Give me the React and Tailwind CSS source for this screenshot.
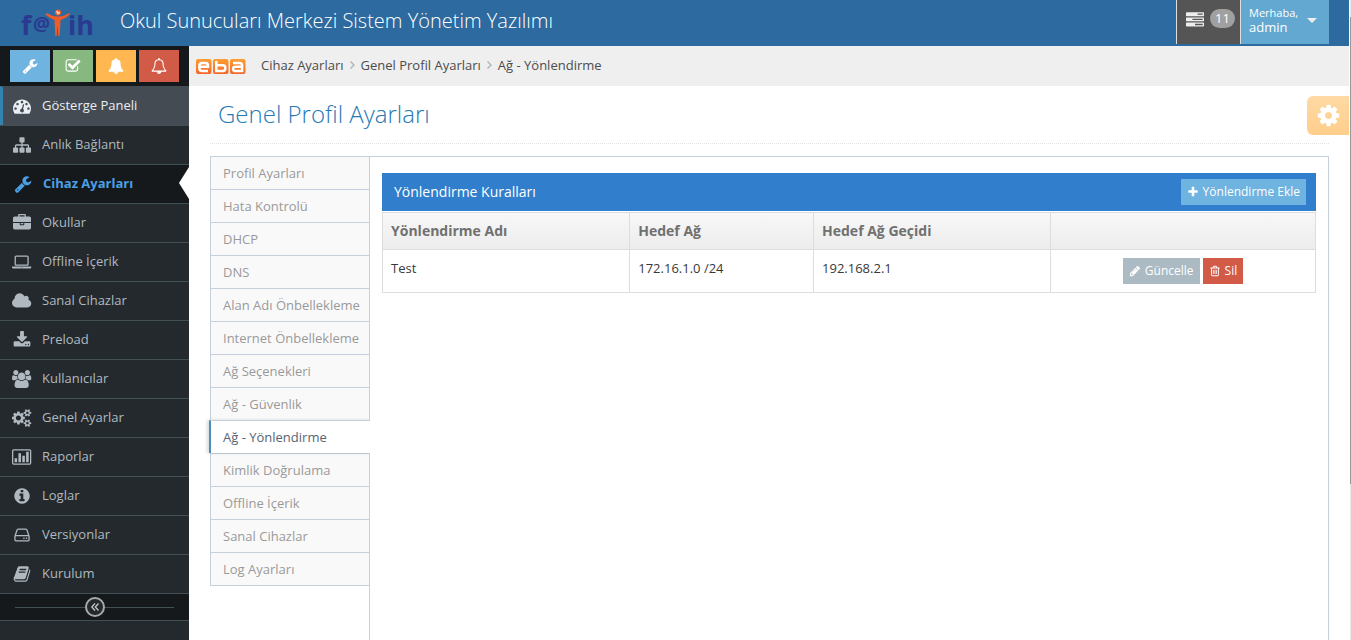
const ICONS = {
  wrench: [1792, "M448 1472q0-26-19-45t-45-19-45 19-19 45 19 45 45 19 45-19 19-45zm644-420l-682 682q-37 37-90 37-52 0-91-37l-106-108q-38-36-38-90 0-53 38-91l681-681q39 98 114.500 173.500t173.500 114.500zm634-435q0 39-23 106-47 134-164.500 217.500t-258.500 83.500q-185 0-316.500-131.500t-131.500-316.500 131.500-316.500 316.500-131.500q58 0 121.500 16.500t107.500 46.500q16 11 16 28t-16 28l-293 169v224l193 107q5-3 79-48.500t135.500-81 70.500-35.500q15 0 23.500 10t8.500 25z"],
  check: [1792, "M1472 930v318q0 119-84.500 203.500t-203.500 84.500h-832q-119 0-203.500-84.500t-84.500-203.500v-832q0-119 84.500-203.500t203.500-84.500h832q63 0 117 25 15 7 18 23 3 17-9 29l-49 49q-10 10-23 10-3 0-9-2-23-6-45-6h-832q-66 0-113 47t-47 113v832q0 66 47 113t113 47h832q66 0 113-47t47-113v-254q0-13 9-22l64-64q10-10 23-10 6 0 12 3 20 8 20 29zm231-489l-814 814q-24 24-57 24t-57-24l-430-430q-24-24-24-57t24-57l110-110q24-24 57-24t57 24l263 263 647-647q24-24 57-24t57 24l110 110q24 24 24 57t-24 57z"],
  gauge: [1792, "M384 1152q0-53-37.500-90.500t-90.500-37.500-90.500 37.500-37.500 90.500 37.500 90.500 90.500 37.500 90.500-37.500 37.500-90.500zm192-448q0-53-37.500-90.500t-90.500-37.500-90.500 37.500-37.500 90.500 37.500 90.500 90.500 37.500 90.500-37.500 37.500-90.500zm428 481l101-382q6-26-7.500-48.500t-38.500-29.500-48 6.500-30 39.500l-101 382q-60 5-107 43.500t-63 98.500q-20 77 20 146t117 89 146-20 89-117q16-60-6-117t-72-91zm660-33q0-53-37.500-90.500t-90.500-37.500-90.500 37.500-37.500 90.500 37.500 90.500 90.500 37.500 90.500-37.500 37.500-90.500zm-640-640q0-53-37.500-90.500t-90.500-37.500-90.500 37.500-37.500 90.500 37.500 90.500 90.500 37.500 90.500-37.500 37.500-90.500zm448 192q0-53-37.500-90.500t-90.500-37.500-90.500 37.500-37.500 90.500 37.500 90.500 90.500 37.500 90.500-37.500 37.500-90.500zm320 448q0 261-141 483-19 29-54 29h-1402q-35 0-54-29-141-221-141-483 0-182 71-348t191-286 286-191 348-71 348 71 286 191 191 286 71 348z"],
  bell: [1792, "M912 1696q0-16-16-16-59 0-101.500-42.500t-42.500-101.500q0-16-16-16t-16 16q0 73 51.500 124.500t124.500 51.500q16 0 16-16zm816-288q0 52-38 90t-90 38h-448q0 106-75 181t-181 75-181-75-75-181h-448q-52 0-90-38t-38-90q50-42 91-88t85-119.500 74.500-158.500 50-206 19.500-260q0-152 117-282.500t307-158.500q-8-19-8-39 0-40 28-68t68-28 68 28 28 68q0 20-8 39 190 28 307 158.500t117 282.500q0 139 19.500 260t50 206 74.500 158.500 85 119.500 91 88z"],
  bellOutline: [1792, "M912 1696q0-16-16-16-59 0-101.500-42.500t-42.500-101.500q0-16-16-16t-16 16q0 73 51.500 124.500t124.500 51.500q16 0 16-16zm-666-288h1300q-266-300-266-832 0-51-24-105t-69-103-121.500-80.500-169.500-31.500-169.500 31.500-121.500 80.500-69 103-24 105q0 532-266 832zm1482 0q0 52-38 90t-90 38h-448q0 106-75 181t-181 75-181-75-75-181h-448q-52 0-90-38t-38-90q50-42 91-88t85-119.500 74.500-158.500 50-206 19.500-260q0-152 117-282.500t307-158.500q-8-19-8-39 0-40 28-68t68-28 68 28 28 68q0 20-8 39 190 28 307 158.500t117 282.500q0 139 19.500 260t50 206 74.500 158.500 85 119.500 91 88z"],
  sitemap: [1792, "M1792 1248v320q0 40-28 68t-68 28h-320q-40 0-68-28t-28-68v-320q0-40 28-68t68-28h96v-192h-512v192h96q40 0 68 28t28 68v320q0 40-28 68t-68 28h-320q-40 0-68-28t-28-68v-320q0-40 28-68t68-28h96v-192h-512v192h96q40 0 68 28t28 68v320q0 40-28 68t-68 28h-320q-40 0-68-28t-28-68v-320q0-40 28-68t68-28h96v-192q0-52 38-90t90-38h512v-192h-96q-40 0-68-28t-28-68v-320q0-40 28-68t68-28h320q40 0 68 28t28 68v320q0 40-28 68t-68 28h-96v192h512q52 0 90 38t38 90v192h96q40 0 68 28t28 68z"],
  briefcase: [1792, "M640 256h512v-128h-512v128zm1152 640v480q0 66-47 113t-113 47h-1472q-66 0-113-47t-47-113v-480h672v160q0 26 19 45t45 19h320q26 0 45-19t19-45v-160h672zm-768 0v128h-256v-128h256zm768-480v384h-1792v-384q0-66 47-113t113-47h352v-160q0-40 28-68t68-28h576q40 0 68 28t28 68v160h352q66 0 113 47t47 113z"],
  laptop: [1920, "M416 1280q-66 0-113-47t-47-113v-704q0-66 47-113t113-47h1088q66 0 113 47t47 113v704q0 66-47 113t-113 47h-1088zm-32-864v704q0 13 9.500 22.500t22.500 9.500h1088q13 0 22.500-9.500t9.500-22.500v-704q0-13-9.500-22.500t-22.500-9.500h-1088q-13 0-22.500 9.500t-9.500 22.500zm1376 928h160v96q0 40-47 68t-113 28h-1600q-66 0-113-28t-47-68v-96h1760zm-720 96q16 0 16-16t-16-16h-160q-16 0-16 16t16 16h160z"],
  cloud: [1920, "M1920 1152q0 159-112.500 271.500t-271.500 112.500h-1088q-185 0-316.500-131.500t-131.500-316.500q0-132 71-241.500t187-163.500q-2-28-2-43 0-212 150-362t362-150q158 0 286.500 88t187.500 230q70-62 166-62 106 0 181 75t75 181q0 75-41 138 129 30 213 134.500t84 239.500z"],
  download: [1792, "M1344 1344q0-26-19-45t-45-19-45 19-19 45 19 45 45 19 45-19 19-45zm256 0q0-26-19-45t-45-19-45 19-19 45 19 45 45 19 45-19 19-45zm128-224v320q0 40-28 68t-68 28h-1472q-40 0-68-28t-28-68v-320q0-40 28-68t68-28h465l135 136q58 56 136 56t136-56l136-136h464q40 0 68 28t28 68zm-325-569q17 41-14 70l-448 448q-18 19-45 19t-45-19l-448-448q-31-29-14-70 17-39 59-39h256v-448q0-26 19-45t45-19h256q26 0 45 19t19 45v448h256q42 0 59 39z"],
  users: [1920, "M593 896q-162 5-265 128h-134q-82 0-138-40.500t-56-118.500q0-353 124-353 6 0 43.500 21t97.500 42.500 119 21.500q67 0 133-23-5 37-5 66 0 139 81 256zm1071 637q0 120-73 189.500t-194 69.500h-874q-121 0-194-69.500t-73-189.500q0-53 3.500-103.500t14-109 26.500-108.500 43-97.500 62-81 85.500-53.500 111.500-20q10 0 43 21.500t73 48 107 48 135 21.500 135-21.500 107-48 73-48 43-21.500q61 0 111.500 20t85.500 53.500 62 81 43 97.500 26.500 108.500 14 109 3.500 103.500zm-1024-1277q0 106-75 181t-181 75-181-75-75-181 75-181 181-75 181 75 75 181zm704 384q0 159-112.500 271.500t-271.500 112.500-271.500-112.500-112.500-271.500 112.500-271.500 271.500-112.500 271.500 112.500 112.500 271.500zm576 225q0 78-56 118.500t-138 40.500h-134q-103-123-265-128 81-117 81-256 0-29-5-66 66 23 133 23 59 0 119-21.500t97.500-42.500 43.500-21q124 0 124 353zm-128-609q0 106-75 181t-181 75-181-75-75-181 75-181 181-75 181 75 75 181z"],
  cogs: [1920, "M896 896q0-106-75-181t-181-75-181 75-75 181 75 181 181 75 181-75 75-181zm768 512q0-52-38-90t-90-38-90 38-38 90q0 53 37.500 90.500t90.500 37.500 90.500-37.500 37.500-90.500zm0-1024q0-52-38-90t-90-38-90 38-38 90q0 53 37.500 90.500t90.500 37.500 90.500-37.500 37.500-90.500zm-384 421v185q0 10-7 19.500t-16 10.500l-155 24q-11 35-32 76 34 48 90 115 7 11 7 20 0 12-7 19-23 30-82.500 89.500t-78.500 59.500q-11 0-21-7l-115-90q-37 19-77 31-11 108-23 155-7 24-30 24h-186q-11 0-20-7.500t-10-17.500l-23-153q-34-10-75-31l-118 89q-7 7-20 7-11 0-21-8-144-133-144-160 0-9 7-19 10-14 41-53t47-61q-23-44-35-82l-152-24q-10-1-17-9.500t-7-19.500v-185q0-10 7-19.500t16-10.500l155-24q11-35 32-76-34-48-90-115-7-11-7-20 0-12 7-20 22-30 82-89t79-59q11 0 21 7l115 90q34-18 77-32 11-108 23-154 7-24 30-24h186q11 0 20 7.500t10 17.500l23 153q34 10 75 31l118-89q8-7 20-7 11 0 21 8 144 133 144 160 0 8-7 19-12 16-42 54t-45 60q23 48 34 82l152 23q10 2 17 10.500t7 19.500zm640 533v140q0 16-149 31-12 27-30 52 51 113 51 138 0 4-4 7-122 71-124 71-8 0-46-47t-52-68q-20 2-30 2t-30-2q-14 21-52 68t-46 47q-2 0-124-71-4-3-4-7 0-25 51-138-18-25-30-52-149-15-149-31v-140q0-16 149-31 13-29 30-52-51-113-51-138 0-4 4-7 4-2 35-20t59-34 30-16q8 0 46 46.500t52 67.500q20-2 30-2t30 2q51-71 92-112l6-2q4 0 124 70 4 3 4 7 0 25-51 138 17 23 30 52 149 15 149 31zm0-1024v140q0 16-149 31-12 27-30 52 51 113 51 138 0 4-4 7-122 71-124 71-8 0-46-47t-52-68q-20 2-30 2t-30-2q-14 21-52 68t-46 47q-2 0-124-71-4-3-4-7 0-25 51-138-18-25-30-52-149-15-149-31v-140q0-16 149-31 13-29 30-52-51-113-51-138 0-4 4-7 4-2 35-20t59-34 30-16q8 0 46 46.500t52 67.500q20-2 30-2t30 2q51-71 92-112l6-2q4 0 124 70 4 3 4 7 0 25-51 138 17 23 30 52 149 15 149 31z"],
  chart: [1920, "M0 288q0-66 47-113t113-47h1600q66 0 113 47t47 113v1216q0 66-47 113t-113 47h-1600q-66 0-113-47t-47-113zm128 0v1216q0 32 32 32h1600q32 0 32-32v-1216q0-32-32-32h-1600q-32 0-32 32zM256 1024h256v384h-256zM640 512h256v896h-256zM1024 768h256v640h-256zM1408 384h256v1024h-256z"],
  info: [1792, "M1152 1376v-160q0-14-9-23t-23-9h-96v-512q0-14-9-23t-23-9h-320q-14 0-23 9t-9 23v160q0 14 9 23t23 9h96v320h-96q-14 0-23 9t-9 23v160q0 14 9 23t23 9h448q14 0 23-9t9-23zm-128-896v-160q0-14-9-23t-23-9h-192q-14 0-23 9t-9 23v160q0 14 9 23t23 9h192q14 0 23-9t9-23zm640 416q0 209-103 385.500t-279.500 279.500-385.500 103-385.500-103-279.500-279.500-103-385.500 103-385.500 279.500-279.500 385.500-103 385.500 103 279.500 279.500 103 385.500z"],
  hdd: [1792, "M1168 1216q0 33-23.500 56.500t-56.500 23.500-56.500-23.500-23.500-56.500 23.500-56.500 56.500-23.500 56.500 23.500 23.500 56.500zm256 0q0 33-23.500 56.500t-56.500 23.500-56.500-23.500-23.500-56.500 23.500-56.500 56.500-23.500 56.500 23.500 23.500 56.500zm112 160v-320q0-13-9.500-22.500t-22.500-9.500h-1216q-13 0-22.500 9.500t-9.500 22.500v320q0 13 9.500 22.500t22.500 9.500h1216q13 0 22.500-9.500t9.500-22.500zm-1230-480h1180l-157-482q-4-13-16-21.500t-26-8.500h-782q-14 0-26 8.500t-16 21.500zm1358 160v320q0 66-47 113t-113 47h-1216q-66 0-113-47t-47-113v-320q0-25 16-75l197-606q17-53 63-86t101-33h782q55 0 101 33t63 86l197 606q16 50 16 75z"],
  book: [1792, "M1703 478q40 57 18 129l-275 906q-19 64-76.500 107.500t-122.500 43.500h-923q-77 0-148.500-53.500t-99.500-131.500q-24-67-2-127 0-4 3-27t4-37q1-8-3-21.500t-3-19.500q2-11 8-21t16.500-23.500 16.500-23.500q23-38 45-91.500t30-91.500q3-10 .5-30t-.5-28q3-11 17-28t17-23q21-36 42-92t25-90q1-9-2.500-32t.5-28q4-13 22-30.500t22-22.500q19-26 42.500-84.500t27.500-96.500q1-8-3-25.500t-2-26.500q2-8 9-18t18-23 17-21q8-12 16.500-30.500t15-35 16-36 19.500-32 26.500-23.500 36-11.500 47.500 5.500l-1 3q38-9 51-9h761q74 0 114 56t18 130l-274 906q-36 119-71.500 153.500t-128.500 34.500h-869q-27 0-38 15-11 16-1 43 24 70 144 70h923q29 0 56-15.500t35-41.500l300-987q7-22 5-57 38 15 59 43zm-1064 2q-4 13 2 22.500t20 9.500h608q13 0 25.500-9.500t16.500-22.500l21-64q4-13-2-22.500t-20-9.500h-608q-13 0-25.500 9.500t-16.500 22.500zm-83 256q-4 13 2 22.500t20 9.500h608q13 0 25.500-9.500t16.500-22.500l21-64q4-13-2-22.500t-20-9.500h-608q-13 0-25.500 9.500t-16.500 22.500z"],
  cog: [1792, "M1152 896q0-106-75-181t-181-75-181 75-75 181 75 181 181 75 181-75 75-181zm512-109v222q0 12-8 23t-20 13l-185 28q-19 54-39 91 35 50 107 138 10 12 10 25t-9 23q-27 37-99 108t-94 71q-12 0-26-9l-138-108q-44 23-91 38-16 136-29 186-7 28-36 28h-222q-14 0-24.500-8.500t-11.500-21.500l-28-184q-49-16-90-37l-141 107q-10 9-25 9-14 0-25-11-126-114-165-168-7-10-7-23 0-12 8-23 15-21 51-66.500t54-70.500q-27-50-41-99l-183-27q-13-2-21-12.500t-8-23.500v-222q0-12 8-23t19-13l186-28q14-46 39-92-40-57-107-138-10-12-10-24 0-10 9-23 26-36 98.500-107.500t94.500-71.500q13 0 26 10l138 107q44-23 91-38 16-136 29-186 7-28 36-28h222q14 0 24.500 8.500t11.500 21.500l28 184q49 16 90 37l142-107q9-9 24-9 13 0 25 10 129 119 165 170 7 8 7 22 0 12-8 23-15 21-51 66.500t-54 70.500q26 50 41 98l183 28q13 2 21 12.500t8 23.500z"],
  plus: [1792, "M1600 736v192q0 40-28 68t-68 28h-416v416q0 40-28 68t-68 28h-192q-40 0-68-28t-28-68v-416h-416q-40 0-68-28t-28-68v-192q0-40 28-68t68-28h416v-416q0-40 28-68t68-28h192q40 0 68 28t28 68v416h416q40 0 68 28t28 68z"],
  pencil: [1792, "M491 1536l91-91-235-235-91 91v107h128v128h107zm523-928q0-22-22-22-10 0-17 7l-542 542q-7 7-7 17 0 22 22 22 10 0 17-7l542-542q7-7 7-17zm-54-192l416 416-832 832h-416v-416zm683 96q0 53-37 90l-166 166-416-416 166-165q36-38 90-38 53 0 91 38l235 234q37 39 37 91z"],
  trash: [1792, "M704 736v576q0 14-9 23t-23 9h-64q-14 0-23-9t-9-23v-576q0-14 9-23t23-9h64q14 0 23 9t9 23zm256 0v576q0 14-9 23t-23 9h-64q-14 0-23-9t-9-23v-576q0-14 9-23t23-9h64q14 0 23 9t9 23zm256 0v576q0 14-9 23t-23 9h-64q-14 0-23-9t-9-23v-576q0-14 9-23t23-9h64q14 0 23 9t9 23zm128 724v-948h-896v948q0 22 7 40.500t14.500 27 10.500 8.500h832q3 0 10.500-8.500t14.500-27 7-40.500zm-672-1076h448l-48-117q-7-9-17-11h-317q-10 2-17 11zm928 32v64q0 14-9 23t-23 9h-96v948q0 83-47 143.500t-113 60.500h-832q-66 0-113-58.500t-47-141.500v-952h-96q-14 0-23-9t-9-23v-64q0-14 9-23t23-9h309l70-167q15-37 54-63t79-26h320q40 0 79 26t54 63l70 167h309q14 0 23 9t9 23z"],
  tasks: [1792, "M64 128h1664q64 0 64 64v256q0 64-64 64h-1664q-64 0-64-64v-256q0-64 64-64zM1152 256v128h512v-128zM64 640h1664q64 0 64 64v256q0 64-64 64h-1664q-64 0-64-64v-256q0-64 64-64zM640 768v128h1024v-128zM64 1152h1664q64 0 64 64v256q0 64-64 64h-1664q-64 0-64-64v-256q0-64 64-64zM896 1280v128h768v-128z"],
};

function Icon({ name, className }) {
  const [width, d] = ICONS[name];
  return (
    <svg aria-hidden="true" viewBox={`0 0 ${width} 1792`} fill="currentColor" fillRule={name === "chart" || name === "tasks" ? "evenodd" : "nonzero"} className={`shrink-0 ${className}`}>
      <path d={d} />
    </svg>
  );
}

const MENU = [
  ["gauge", "Gösterge Paneli"],
  ["sitemap", "Anlık Bağlantı"],
  ["wrench", "Cihaz Ayarları"],
  ["briefcase", "Okullar"],
  ["laptop", "Offline İçerik"],
  ["cloud", "Sanal Cihazlar"],
  ["download", "Preload"],
  ["users", "Kullanıcılar"],
  ["cogs", "Genel Ayarlar"],
  ["chart", "Raporlar"],
  ["info", "Loglar"],
  ["hdd", "Versiyonlar"],
  ["book", "Kurulum"],
];

const SHORTCUTS = [
  ["wrench", "Cihaz ayarları", "bg-[#6fb3e0]"],
  ["check", "Onaylar", "bg-[#87b87f]"],
  ["bell", "Bildirimler", "bg-[#ffb752]"],
  ["bellOutline", "Uyarılar", "bg-[#d15b47]"],
];

const TABS = [
  "Profil Ayarları",
  "Hata Kontrolü",
  "DHCP",
  "DNS",
  "Alan Adı Önbellekleme",
  "Internet Önbellekleme",
  "Ağ Seçenekleri",
  "Ağ - Güvenlik",
  "Ağ - Yönlendirme",
  "Kimlik Doğrulama",
  "Offline İçerik",
  "Sanal Cihazlar",
  "Log Ayarları",
];

function FatihLogo() {
  return (
    <svg role="img" aria-label="fatih" viewBox="0 0 78 46" className="h-[46px] w-[78px]">
      <g fill="#2b3990" fontFamily="'Open Sans', sans-serif" fontWeight="700">
        <text x="1" y="35" fontSize="27">f</text>
        <text x="13" y="31" fontSize="19">@</text>
        <text x="48" y="35" fontSize="27">ih</text>
      </g>
      <g fill="#f15a29">
        <path d="M26 14l1-1q5 3.500 11 3.500t11-3.500l1 1q-4 4.500-9.500 6l-.8 16h-1.400l-.6-9h-.4l-.6 9h-1.400l-.8-16q-5-1.500-9.500-6z" />
        <circle cx="38" cy="12.500" r="3" />
      </g>
      <path d="M36 11.500l1.500-1 1 1.500 1.500-.5-.5 2.500-2 .5z" fill="#f9c9b2" />
    </svg>
  );
}

function EbaLogo() {
  return (
    <svg role="img" aria-label="eba" viewBox="0 0 50 16" className="h-4 w-[50px] shrink-0">
      <defs>
        <linearGradient id="eba" x1="0" y1="0" x2="0" y2="1">
          <stop offset="0" stopColor="#fba033" />
          <stop offset="1" stopColor="#f7652b" />
        </linearGradient>
      </defs>
      <g fill="url(#eba)">
        <rect x="0" y="1" width="15.500" height="15" rx="2" />
        <rect x="17" y="1" width="15.500" height="15" rx="2" />
        <rect x="34" y="1" width="15.500" height="15" rx="2" />
      </g>
      <g fill="none" stroke="#fff" strokeWidth="2.500">
        <path d="M3.500 8.800h8.500v-1q0-2.800-2.500-2.800h-3.500q-2.600 0-2.600 2.800v2.400q0 2.800 2.600 2.800h6" />
        <path d="M20.300 3v10h6.500q2.500 0 2.500-2.500v-.8q0-2.500-2.500-2.500h-6.500" />
        <path d="M37 5h6.500q2.600 0 2.600 2.500v5.500h-6.500q-2.500 0-2.500-2.100 0-2.100 2.500-2.100h6.500" />
      </g>
    </svg>
  );
}

function Crumb({ children, last }) {
  return (
    <li className="flex items-center">
      {last ? <span>{children}</span> : <a href="#">{children}</a>}
      {!last && (
        <svg aria-hidden="true" viewBox="0 0 5 8" className="mx-[6px] h-2 w-[5px]" fill="none" stroke="#b2b6bf" strokeWidth="1.500">
          <path d="M.5 .5l3.500 3.500-3.500 3.500" />
        </svg>
      )}
    </li>
  );
}

function SidebarItem({ icon, label, index }) {
  const hovered = index === 0;
  const active = index === 2;
  const tone = hovered
    ? "bg-[#444b52] text-[#e8eef2] pl-[9px]"
    : active
      ? "bg-[#15191c] text-[#4b9fe3] font-bold pl-[13px]"
      : "bg-[#23292c] text-[#b0b9c0] pl-3";
  const edge = hovered ? "border-l-[3px] border-l-[#3382af] border-t-[#444b52]" : "border-t-[#425056]";
  return (
    <li className={`relative border-t last:border-b last:border-b-[#425056] ${edge}`}>
      <a href="#" className={`flex h-[38px] items-center gap-[10px] ${tone}`}>
        <span className="flex w-5 justify-center">
          <Icon name={icon} className="h-[18px]" />
        </span>
        <span className="pb-[2px]">{label}</span>
      </a>
      {active && (
        <svg aria-hidden="true" viewBox="0 0 10 32" className="absolute right-0 top-[2px] h-8 w-[10px]">
          <path d="M10 0v32L0 16z" fill="#fff" />
        </svg>
      )}
    </li>
  );
}

export default function App() {
  return (
    <div className="flex h-screen overflow-hidden bg-white font-['Open_Sans','Noto_Sans',sans-serif] text-[13px] leading-5 text-[#393939]">
      <div className="flex min-w-0 grow flex-col">
        <header className="flex h-[46px] shrink-0 items-start bg-[#2c6aa0] pr-5 text-white">
          <a href="#" className="flex pl-5">
            <FatihLogo />
          </a>
          <h1 className="grow pl-[22px] pt-[6px] text-[20px] font-light leading-[30px]">Okul Sunucuları Merkezi Sistem Yönetim Yazılımı</h1>
          <button type="button" className="flex h-11 w-16 items-start gap-[6px] border-l border-[#ddd] bg-[#555] pl-[9px] pt-[9px]">
            <Icon name="tasks" className="mt-[2px] h-[18px] w-[18px] text-[#eee]" />
            <span className="rounded-full bg-[#a0a0a0] px-[5px] text-[13px] leading-[19px]">11</span>
          </button>
          <button type="button" className="flex h-11 w-[89px] items-center justify-between border-l border-[#ddd] bg-[#62a8d1] pb-1 pl-2 pr-3 text-left">
            <span className="flex flex-col">
              <small className="text-[11px] leading-[14px]">Merhaba,</small>
              <span className="leading-[14px]">admin</span>
            </span>
            <svg aria-hidden="true" viewBox="0 0 10 5" className="h-[5px] w-[10px]">
              <path d="M0 0h10L5 5z" fill="#eee" />
            </svg>
          </button>
        </header>

        <div className="flex min-h-0 grow">
          <aside className="flex w-[189px] shrink-0 flex-col bg-[#23292c]">
            <div className="flex h-10 shrink-0 items-center gap-[3px] bg-[#15191c] pl-[10px]">
              {SHORTCUTS.map(([icon, label, tone]) => (
                <button key={icon} type="button" aria-label={label} className={`flex h-8 w-10 items-center justify-center text-white ${tone}`}>
                  <Icon name={icon} className="h-4" />
                </button>
              ))}
            </div>
            <nav>
              <ul>
                {MENU.map(([icon, label], index) => (
                  <SidebarItem key={label} icon={icon} label={label} index={index} />
                ))}
              </ul>
            </nav>
            <div className="flex h-[27px] shrink-0 items-center border-b border-[#425056] bg-[#15191c] px-[15px]">
              <span className="h-px grow bg-[#425056]" />
              <button type="button" aria-label="Menüyü daralt" className="flex h-5 w-5 items-center justify-center rounded-full border-2 border-[#aaa] bg-[#23292c]">
                <svg aria-hidden="true" viewBox="0 0 8 8" className="h-2 w-2" fill="none" stroke="#ccc" strokeWidth="1.200">
                  <path d="M4 .5L.8 4 4 7.500M7.500 .5L4.300 4l3.200 3.500" />
                </svg>
              </button>
              <span className="h-px grow bg-[#425056]" />
            </div>
          </aside>

          <main className="relative flex min-w-0 grow flex-col">
            <nav className="flex h-10 shrink-0 items-center bg-[#efefef] pl-[7px] text-[#4c4c4c]">
              <EbaLogo />
              <ol className="ml-[15px] flex pb-[2px]">
                <Crumb>Cihaz Ayarları</Crumb>
                <Crumb>Genel Profil Ayarları</Crumb>
                <Crumb last>Ağ - Yönlendirme</Crumb>
              </ol>
            </nav>
            <button type="button" aria-label="Ayarlar" className="absolute right-0 top-[50px] flex h-[39px] w-[42px] items-center justify-center rounded-l-md bg-linear-to-b from-[#ffd9a4] to-[#ffce8b] text-white">
              <Icon name="cog" className="h-[25px] w-[25px]" />
            </button>

            <section className="flex min-h-0 grow flex-col pl-[21px] pr-5 pt-2">
              <div className="border-b border-dotted border-[#e2e2e2] pb-[15px] pl-2 pt-[5px]">
                <h2 className="text-[24px] font-light leading-[29px] text-[#2679b5]">Genel Profil Ayarları</h2>
              </div>

              <div className="mt-3 flex min-h-0 grow">
                <ul className="w-[160px] shrink-0">
                  {TABS.map((tab) =>
                    tab === "Ağ - Yönlendirme" ? (
                      <li key={tab} className="relative z-10 -ml-px w-[161px]">
                        <a href="#" className="block h-[33px] border-l-2 border-t border-l-[#4c8fbd] border-t-[#c5d0dc] bg-white pl-3 leading-8 text-[#576373] shadow-[-2px_0_3px_0_rgba(0,0,0,0.15)]">{tab}</a>
                      </li>
                    ) : (
                      <li key={tab} className="last:border-b last:border-[#c5d0dc]">
                        <a href="#" className="block h-[33px] border-l border-t border-[#c5d0dc] bg-[#f9f9f9] pl-3 leading-8 text-[#999]">{tab}</a>
                      </li>
                    ),
                  )}
                </ul>
                <div className="-ml-px min-w-0 grow border border-b-0 border-[#c5d0dc] px-3 pt-4">
                  <div className="flex h-[38px] items-center justify-between bg-[#307ecc] pl-3 pr-[10px] text-white">
                    <h3 className="text-[14px] font-medium leading-6">Yönlendirme Kuralları</h3>
                    <button type="button" className="flex h-[26px] items-center gap-1 bg-[#6fb3e0] px-[6px] text-[12px]">
                      <Icon name="plus" className="h-3 w-3" />
                      Yönlendirme Ekle
                    </button>
                  </div>
                  <table className="mt-px w-full table-fixed border-collapse text-left">
                    <colgroup>
                      <col className="w-[26.5%]" />
                      <col className="w-[19.7%]" />
                      <col className="w-[25.4%]" />
                      <col />
                    </colgroup>
                    <thead>
                      <tr className="h-[37px] bg-linear-to-b from-[#f8f8f8] to-[#ececec] text-[14px] text-[#707070]">
                        <th className="border border-[#ddd] px-2 font-bold">Yönlendirme Adı</th>
                        <th className="border border-[#ddd] px-2 font-bold">Hedef Ağ</th>
                        <th className="border border-[#ddd] px-2 font-bold">Hedef Ağ Geçidi</th>
                        <th className="border border-[#ddd] px-2" aria-label="İşlemler" />
                      </tr>
                    </thead>
                    <tbody>
                      <tr className="h-[43px] align-top">
                        <td className="border border-[#ddd] px-2 pt-2">Test</td>
                        <td className="border border-[#ddd] px-2 pt-2">172.16.1.0 /24</td>
                        <td className="border border-[#ddd] px-2 pt-2">192.168.2.1</td>
                        <td className="border border-[#ddd] px-2 pt-2">
                          <div className="flex justify-center gap-[3px] text-[12px] text-white">
                            <button type="button" className="flex h-[26px] items-center gap-1 bg-[#abbac3] px-[6px]">
                              <Icon name="pencil" className="h-3 w-3" />
                              Güncelle
                            </button>
                            <button type="button" className="flex h-[26px] items-center gap-1 bg-[#d15b47] px-[6px]">
                              <Icon name="trash" className="h-3 w-3" />
                              Sil
                            </button>
                          </div>
                        </td>
                      </tr>
                    </tbody>
                  </table>
                </div>
              </div>
            </section>
          </main>
        </div>
      </div>
      <div aria-hidden="true" className="flex w-[2px] shrink-0 flex-col border-l border-white bg-[#e8e8e8] pt-[17px]">
        <span className="h-3/4 bg-[#999]" />
      </div>
    </div>
  );
}
